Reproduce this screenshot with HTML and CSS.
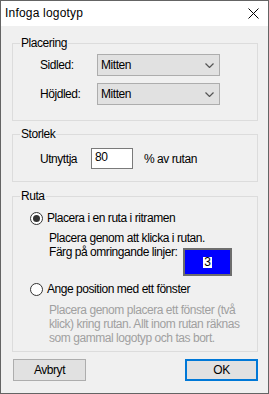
FILE: index.html
```html
<!DOCTYPE html>
<html lang="sv">
<head>
<meta charset="utf-8">
<link rel="stylesheet" href="styles.css">
</head>
<body>
<div class="window">
  <div class="titlebar">
    <span class="title">Infoga logotyp</span>
    <svg class="close" width="11" height="11" viewBox="0 0 11 11"><path d="M0.5 0.5 L10.5 10.5 M10.5 0.5 L0.5 10.5" stroke="#000" stroke-width="1" fill="none"/></svg>
  </div>
  <div class="content">
    <div class="group g1">
      <div class="legend">Placering</div>
      <div class="row r1">
        <span class="lbl">Sidled:</span>
        <div class="combo"><span>Mitten</span><svg width="9" height="5" viewBox="0 0 9 5"><path d="M0.5 0.5 L4.5 4.5 L8.5 0.5" stroke="#555" stroke-width="1.2" fill="none"/></svg></div>
      </div>
      <div class="row r2">
        <span class="lbl">Höjdled:</span>
        <div class="combo"><span>Mitten</span><svg width="9" height="5" viewBox="0 0 9 5"><path d="M0.5 0.5 L4.5 4.5 L8.5 0.5" stroke="#555" stroke-width="1.2" fill="none"/></svg></div>
      </div>
    </div>
    <div class="group g2">
      <div class="legend">Storlek</div>
      <div class="row r3">
        <span class="lbl2">Utnyttja</span>
        <div class="edit">80</div>
        <span class="unit">% av rutan</span>
      </div>
    </div>
    <div class="group g3">
      <div class="legend">Ruta</div>
      <div class="radio-row rr1">
        <span class="radio checked"></span>
        <span>Placera i en ruta i ritramen</span>
      </div>
      <div class="sub">
        <div class="line">Placera genom att klicka i rutan.</div>
        <div class="color-row">
          <span class="line">Färg på omringande linjer:</span>
          <div class="swatch"><span class="num">3</span></div>
        </div>
      </div>
      <div class="radio-row rr2">
        <span class="radio"></span>
        <span>Ange position med ett fönster</span>
      </div>
      <div class="sub disabled">
        <div class="line">Placera genom placera ett fönster (två</div>
        <div class="line">klick) kring rutan. Allt inom rutan räknas</div>
        <div class="line">som gammal logotyp och tas bort.</div>
      </div>
    </div>
    <div class="buttons">
      <div class="btn">Avbryt</div>
      <div class="btn default">OK</div>
    </div>
  </div>
</div>
</body>
</html>
```

FILE: styles.css
```css
* { box-sizing: border-box; }
html, body { margin: 0; padding: 0; }
body {
  font-family: "Liberation Sans", Arial, sans-serif;
  font-size: 12px;
  color: #000;
  background: #f0f0f0;
  white-space: nowrap;
}
.window {
  width: 269px;
  height: 394px;
  border: 1px solid #646464;
  display: flex;
  flex-direction: column;
}
.titlebar {
  height: 25px;
  flex: none;
  background: #fff;
  display: flex;
  align-items: center;
  justify-content: space-between;
  padding-left: 4px;
  padding-right: 9px;
}
.title { font-size: 12px; line-height: 15px; letter-spacing: 0.2px; }
.close { display: block; }
.content {
  flex: 1;
  background: #f0f0f0;
  padding: 0 10px 0 11px;
  display: flex;
  flex-direction: column;
  letter-spacing: -0.45px;
}
.group {
  border: 1px solid #dcdcdc;
  width: 246px;
  flex: none;
}
.legend {
  margin-top: -8px;
  margin-left: 7px;
  padding: 0 1px;
  width: fit-content;
  background: #f0f0f0;
  line-height: 15px;
}
.g1 { margin-top: 17px; padding-bottom: 15px; }
.g2 { margin-top: 13px; padding-bottom: 12px; }
.g3 { margin-top: 14px; padding-bottom: 6px; }
.row {
  display: flex;
  align-items: center;
  padding-left: 27px;
}
.r1 { margin-top: 3px; }
.r2 { margin-top: 7px; }
.r3 { margin-top: 6px; }
.lbl { width: 57px; flex: none; }
.lbl2 { width: 51px; flex: none; }
.combo {
  width: 123px;
  height: 22px;
  flex: none;
  background: #e1e1e1;
  border: 1px solid #adadad;
  display: flex;
  align-items: center;
  justify-content: space-between;
  padding-left: 3px;
  padding-right: 5px;
}
.combo svg { display: block; }
.edit {
  width: 42px;
  height: 21px;
  flex: none;
  background: #fff;
  border: 1px solid #7a7a7a;
  padding-left: 3px;
  line-height: 17px;
}
.unit { margin-left: 11px; }
.radio-row {
  display: flex;
  align-items: center;
  padding-left: 17px;
  line-height: 15px;
}
.rr1 { margin-top: 7px; }
.rr2 { margin-top: 6px; }
.radio {
  width: 13px;
  height: 13px;
  flex: none;
  border: 1px solid #333;
  border-radius: 50%;
  background: #fff;
  margin-right: 4px;
  display: flex;
  align-items: center;
  justify-content: center;
}
.radio.checked::after {
  content: "";
  width: 7px;
  height: 7px;
  border-radius: 50%;
  background: #333;
}
.sub {
  padding-left: 36px;
  margin-top: 5px;
}
.sub .line { line-height: 14px; display: block; }
.color-row {
  display: flex;
  align-items: flex-start;
}
.color-row .line { width: 134px; flex: none; }
.swatch {
  margin-top: 3px;
  width: 49px;
  height: 28px;
  flex: none;
  background: #0000ff;
  border: 2px solid #6d6d6d;
  display: flex;
  align-items: center;
  justify-content: center;
}
.num {
  background: #fff;
  color: #000;
  line-height: 11px;
  padding: 0 1px;
  font-size: 12px;
  letter-spacing: 0;
}
.disabled { color: #a0a0a0; margin-top: 6px; }
.buttons {
  display: flex;
  justify-content: space-between;
  margin-top: 7px;
  padding-left: 1px;
  width: 246px;
  flex: none;
}
.btn {
  width: 73px;
  height: 22px;
  background: #e1e1e1;
  border: 1px solid #adadad;
  display: flex;
  align-items: center;
  justify-content: center;
}
.btn.default { border: 2px solid #0078d7; }
```
